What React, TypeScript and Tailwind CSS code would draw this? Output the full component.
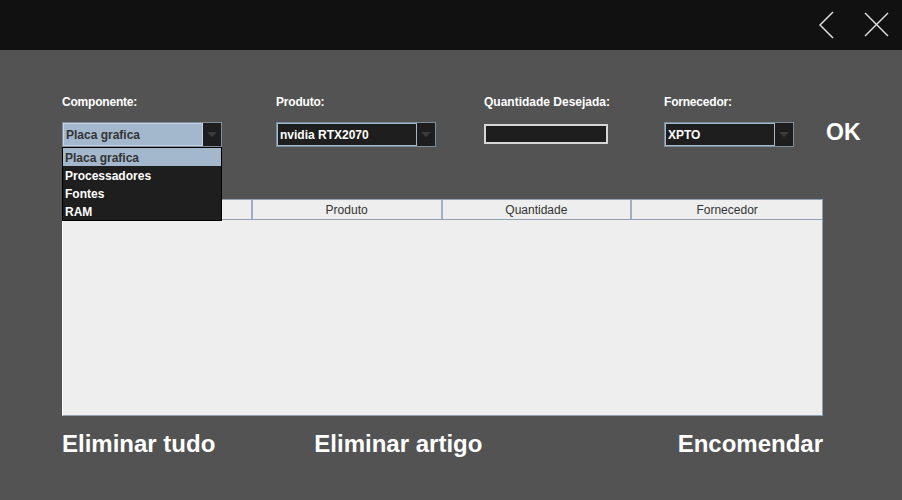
import { useState } from "react";

const ITEMS = ["Placa grafica", "Processadores", "Fontes", "RAM"];
const COLUMNS = ["", "Produto", "Quantidade", "Fornecedor"];

function Arrow() {
    return (
        <div className="w-[18px] h-full bg-[#1e1e1e] flex items-center justify-center">
            <svg width="10" height="6" viewBox="0 0 10 6">
                <polygon points="0,0 10,0 5,5" fill="#3a3a3a" />
            </svg>
        </div>
    );
}

function Combo({ value, width, selected }: { value: string; width: string; selected?: boolean }) {
    return (
        <div className={`${width} h-[25px] flex border border-[#7d8d9c] bg-[#1e1e1e]`}>
            <div
                className={`flex-1 flex items-center pl-[2px] border ${
                    selected ? "bg-[#a3b8cc] border-[#c3d3e3] text-[#333333]" : "bg-[#1e1e1e] border-[#a3b8cc] text-white"
                } text-[12px] font-bold`}
            >
                {value}
            </div>
            <Arrow />
        </div>
    );
}

export default function App() {
    const [open] = useState(true);

    return (
        <div className="w-[902px] h-[500px] bg-[#535353] flex flex-col" style={{ fontFamily: '"Liberation Sans", Arial, sans-serif' }}>
            {/* Title bar */}
            <div className="h-[50px] bg-[#111111] flex items-center justify-end shrink-0">
                <svg width="16" height="28" viewBox="0 0 16 28" className="mr-[29px]">
                    <polyline points="14,1 1,14 14,27" fill="none" stroke="#e0e0e0" strokeWidth="1.5" />
                </svg>
                <svg width="26" height="26" viewBox="0 0 26 26" className="mr-[12px]">
                    <line x1="1" y1="1" x2="24" y2="24" stroke="#e0e0e0" strokeWidth="1.5" />
                    <line x1="24" y1="1" x2="1" y2="24" stroke="#e0e0e0" strokeWidth="1.5" />
                </svg>
            </div>

            {/* Form */}
            <div className="pt-[45px] pl-[62px] grid grid-cols-[214px_208px_180px_162px_auto] text-white">
                <div className="text-[12px] leading-[14px] font-bold tracking-[-0.2px]">Componente:</div>
                <div className="text-[12px] leading-[14px] font-bold tracking-[-0.2px]">Produto:</div>
                <div className="text-[12px] leading-[14px] font-bold">Quantidade Desejada:</div>
                <div className="text-[12px] leading-[14px] font-bold tracking-[-0.2px]">Fornecedor:</div>
                <div />

                <div className="relative mt-[13px]">
                    <Combo value="Placa grafica" width="w-[160px]" selected />
                    {open && (
                        <div className="absolute left-0 top-[25px] w-[160px] bg-[#1e1e1e] border border-black z-10">
                            {ITEMS.map((item, i) => (
                                <div
                                    key={item}
                                    className={`h-[18px] flex items-center pl-[2px] pt-[1px] text-[12px] font-bold ${
                                        i === 0 ? "bg-[#a3b8cc] text-[#333333]" : "text-white"
                                    }`}
                                >
                                    {item}
                                </div>
                            ))}
                        </div>
                    )}
                </div>
                <div className="mt-[13px]">
                    <Combo value="nvidia RTX2070" width="w-[160px]" />
                </div>
                <div className="mt-[15px]">
                    <div className="w-[124px] h-[20px] bg-[#1e1e1e] border-2 border-[#d6d6d6]" />
                </div>
                <div className="mt-[13px]">
                    <Combo value="XPTO" width="w-[130px]" />
                </div>
                <div className="mt-[9px] text-[23px] font-bold leading-[28px]">OK</div>
            </div>

            {/* Table */}
            <div className="ml-[62px] mt-[52px] w-[761px] h-[217px] bg-[#eeeeee] border border-[#8ea0b2] border-l-white flex flex-col">
                <div className="h-[20px] flex border-b border-[#8ea0b2]">
                    {COLUMNS.map((c, i) => (
                        <div
                            key={i}
                            className={`w-[190px] flex items-center justify-center text-[12px] text-[#333333] ${
                                i < 3 ? "border-r-2 border-[#9eafc0]" : ""
                            }`}
                        >
                            {c}
                        </div>
                    ))}
                </div>
                <div className="flex-1" />
            </div>

            {/* Actions */}
            <div className="ml-[62px] mt-[14px] w-[761px] flex text-white text-[24px] leading-[28px] font-bold">
                <span>Eliminar tudo</span>
                <span className="ml-[99px]">Eliminar artigo</span>
                <span className="ml-auto">Encomendar</span>
            </div>
        </div>
    );
}
